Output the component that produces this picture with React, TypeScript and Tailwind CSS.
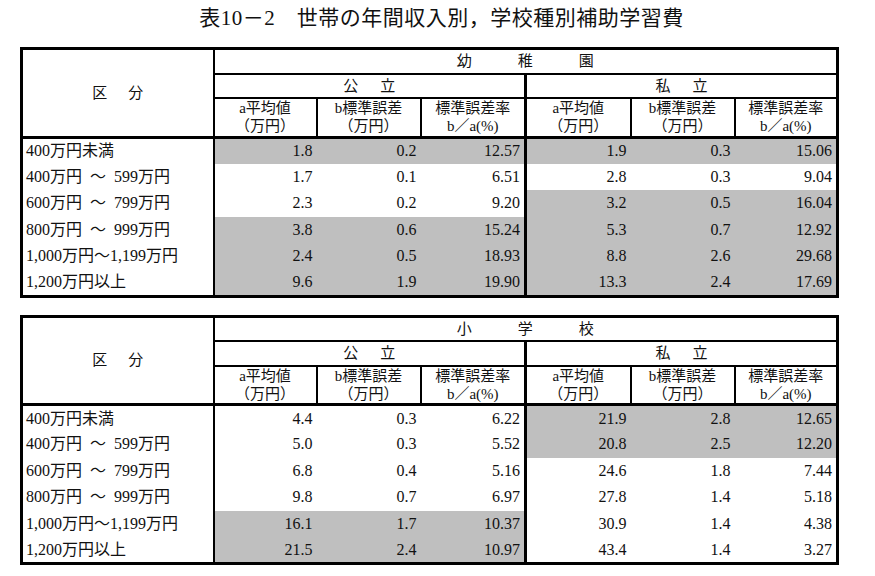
import React from 'react'

const labels = [
  '400万円未満',
  '400万円  ～  599万円',
  '600万円  ～  799万円',
  '800万円  ～  999万円',
  '1,000万円～1,199万円',
  '1,200万円以上',
]

type Row = { pub: string[]; pri: string[]; pubGray: boolean; priGray: boolean }

const kindergarten: Row[] = [
  { pub: ['1.8', '0.2', '12.57'], pri: ['1.9', '0.3', '15.06'], pubGray: true, priGray: true },
  { pub: ['1.7', '0.1', '6.51'], pri: ['2.8', '0.3', '9.04'], pubGray: false, priGray: false },
  { pub: ['2.3', '0.2', '9.20'], pri: ['3.2', '0.5', '16.04'], pubGray: false, priGray: true },
  { pub: ['3.8', '0.6', '15.24'], pri: ['5.3', '0.7', '12.92'], pubGray: true, priGray: true },
  { pub: ['2.4', '0.5', '18.93'], pri: ['8.8', '2.6', '29.68'], pubGray: true, priGray: true },
  { pub: ['9.6', '1.9', '19.90'], pri: ['13.3', '2.4', '17.69'], pubGray: true, priGray: true },
]

const elementary: Row[] = [
  { pub: ['4.4', '0.3', '6.22'], pri: ['21.9', '2.8', '12.65'], pubGray: false, priGray: true },
  { pub: ['5.0', '0.3', '5.52'], pri: ['20.8', '2.5', '12.20'], pubGray: false, priGray: true },
  { pub: ['6.8', '0.4', '5.16'], pri: ['24.6', '1.8', '7.44'], pubGray: false, priGray: false },
  { pub: ['9.8', '0.7', '6.97'], pri: ['27.8', '1.4', '5.18'], pubGray: false, priGray: false },
  { pub: ['16.1', '1.7', '10.37'], pri: ['30.9', '1.4', '4.38'], pubGray: true, priGray: false },
  { pub: ['21.5', '2.4', '10.97'], pri: ['43.4', '1.4', '3.27'], pubGray: true, priGray: false },
]

const subHeads = [
  ['a平均値', '（万円）'],
  ['b標準誤差', '（万円）'],
  ['標準誤差率', 'b／a(%)'],
]

function StatTable({ school, rows }: { school: string[]; rows: Row[] }) {
  return (
    <table className="ml-[20px] w-[816px] table-fixed border-collapse border-[3px] border-black">
      <colgroup>
        <col className="w-[192px]" />
        <col className="w-[103px]" />
        <col className="w-[104px]" />
        <col className="w-[105px]" />
        <col className="w-[105px]" />
        <col className="w-[104px]" />
        <col className="w-[103px]" />
      </colgroup>
      <thead>
        <tr className="h-[25px]">
          <th rowSpan={3} className="border-r-2 border-b-[3px] border-black p-0 text-[15px] font-normal">
            <span>区</span>
            <span className="ml-[21px]">分</span>
          </th>
          <th colSpan={6} className="border-b-2 border-black p-0 text-[15px] font-normal">
            <div className="flex justify-center gap-[46px]">
              {school.map((c) => (
                <span key={c}>{c}</span>
              ))}
            </div>
          </th>
        </tr>
        <tr className="h-[24px]">
          <th colSpan={3} className="border-b-2 border-r-[3px] border-black p-0 text-[15px] font-normal">
            公<span className="ml-[22px]">立</span>
          </th>
          <th colSpan={3} className="border-b-2 border-black p-0 text-[15px] font-normal">
            私<span className="ml-[22px]">立</span>
          </th>
        </tr>
        <tr className="h-[39px]">
          {[0, 1].map((side) =>
            subHeads.map(([a, b], i) => (
              <th
                key={`${side}-${i}`}
                className={`border-b-[3px] border-black p-0 text-[15px] font-normal leading-[18px] ${
                  i === 2 ? (side === 0 ? 'border-r-[3px]' : '') : 'border-r-2'
                }`}
              >
                <div>{a}</div>
                <div>{b}</div>
              </th>
            ))
          )}
        </tr>
      </thead>
      <tbody>
        {rows.map((r, ri) => (
          <tr key={ri} className="h-[26.5px]">
            <td className="border-r-2 border-black p-0 pl-[3px] text-left text-[16px] whitespace-pre">{labels[ri]}</td>
            {r.pub.map((v, i) => (
              <td
                key={`p${i}`}
                className={`p-0 pr-[4px] text-right text-[16px] ${r.pubGray ? 'bg-[#bfbfbf]' : ''} ${
                  i === 2 ? 'border-r-[3px] border-black' : ''
                }`}
              >
                {v}
              </td>
            ))}
            {r.pri.map((v, i) => (
              <td key={`q${i}`} className={`p-0 pr-[4px] text-right text-[16px] ${r.priGray ? 'bg-[#bfbfbf]' : ''}`}>
                {v}
              </td>
            ))}
          </tr>
        ))}
      </tbody>
    </table>
  )
}

export default function App() {
  return (
    <div className="h-[576px] w-[875px] bg-white font-['Liberation_Serif','Noto_Sans_CJK_JP',serif] text-[#111]">
      <h1 className="pt-[6px] pl-[8px] text-center text-[21px] leading-[25px] font-normal tracking-[0.5px]">
        表10－2　世帯の年間収入別，学校種別補助学習費
      </h1>
      <div className="mt-[16px]">
        <StatTable school={['幼', '稚', '園']} rows={kindergarten} />
      </div>
      <div className="mt-[17px]">
        <StatTable school={['小', '学', '校']} rows={elementary} />
      </div>
    </div>
  )
}
